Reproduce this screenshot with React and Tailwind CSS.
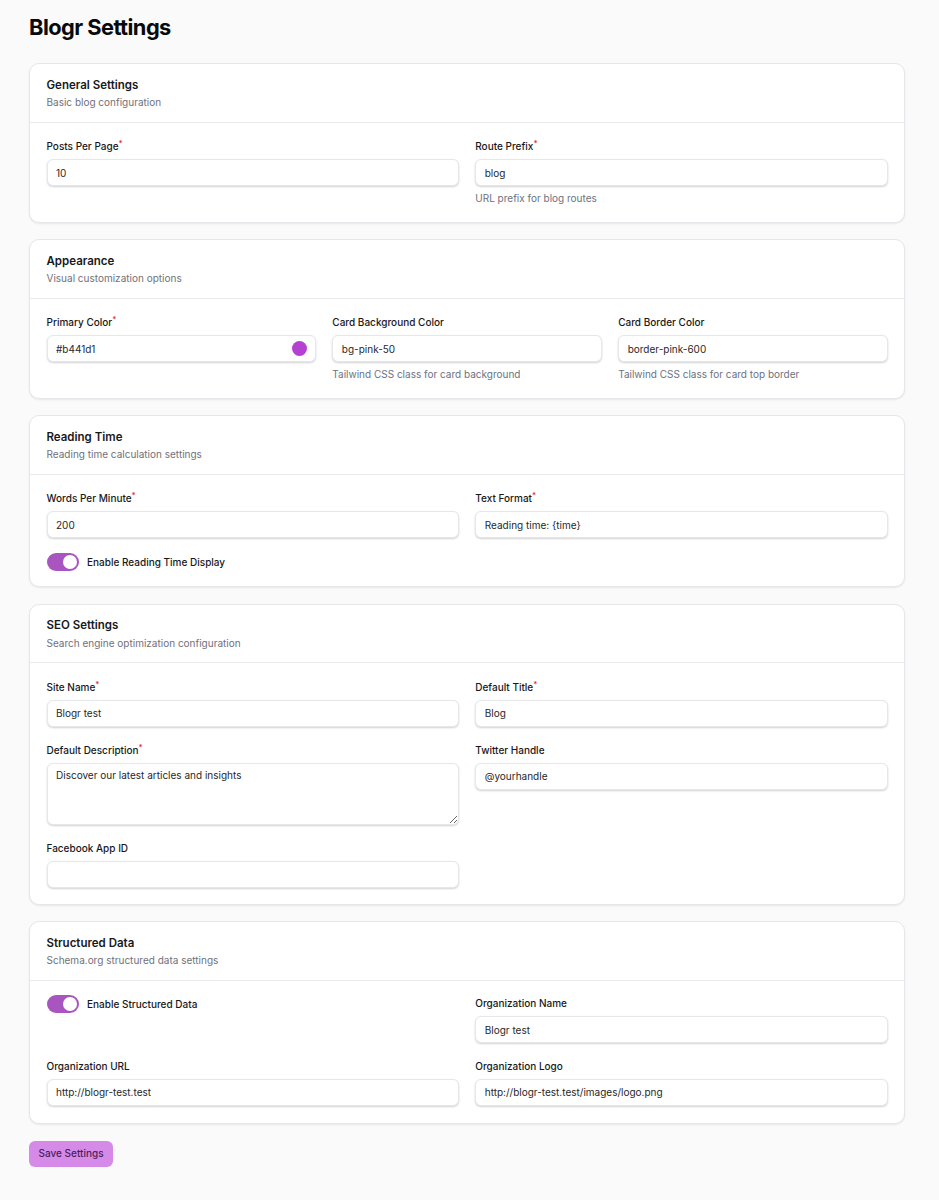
const fontStack = "font-['Inter',sans-serif]";

function Label({ children, required }) {
    return (
        <label className="block h-[13px] text-[10px] leading-[13px] font-medium text-[#18181b]">
            {children}
            {required && <sup className="text-[8px] font-medium text-[#dc2626]">*</sup>}
        </label>
    );
}

function Field({ label, required, value = '', help, swatch }) {
    return (
        <div>
            <Label required={required}>{label}</Label>
            <div className="relative mt-[6px]">
                <input
                    type="text"
                    readOnly
                    value={value}
                    className="block h-[27px] w-full rounded-[6px] border border-[#e5e7eb] bg-white px-[8.5px] text-[10px] text-[#27272a] shadow-[0_1px_2px_rgba(0,0,0,0.18)] outline-none"
                />
                {swatch && (
                    <span className="absolute top-[6px] right-[9px] h-[15px] w-[15px] rounded-full" style={{ backgroundColor: swatch }} />
                )}
            </div>
            {help && <p className="mt-[6px] h-[13.5px] text-[10px] leading-[12px] text-[#6b7280]">{help}</p>}
        </div>
    );
}

function Toggle({ label, className }) {
    return (
        <div className={`flex items-center gap-[8.5px] self-start ${className}`}>
            <span className="flex h-[18px] w-[32px] items-center justify-end rounded-full bg-[#a855c0] pr-[2px]">
                <span className="h-[14px] w-[14px] rounded-full bg-white" />
            </span>
            <span className="text-[10px] font-medium text-[#18181b]">{label}</span>
        </div>
    );
}

function Section({ title, description, children }) {
    return (
        <section className="rounded-[10px] border border-[#e5e7eb] bg-white shadow-[0_1px_2px_rgba(0,0,0,0.08)]">
            <div className="h-[58.5px] border-b border-[#e9eaec] px-[16.5px] pt-[12.5px]">
                <h2 className="text-[11.5px] leading-[16px] font-semibold text-[#18181b]">{title}</h2>
                <p className="mt-[2.5px] text-[10px] leading-[14px] text-[#71717a]">{description}</p>
            </div>
            <div className="px-[16.5px] pt-[17.5px] pb-[16px]">{children}</div>
        </section>
    );
}

export default function App() {
    return (
        <div className={`${fontStack} min-h-[1200px] bg-[#fafafa] pt-[13px] pr-[34px] pl-[29px] antialiased`}>
            <h1 className="h-[50px] text-[21.8px] leading-[28px] font-bold tracking-tight text-[#09090b]">Blogr Settings</h1>

            <div className="flex flex-col gap-[16.5px]">
                <Section title="General Settings" description="Basic blog configuration">
                    <div className="grid grid-cols-2 gap-[16.5px]">
                        <Field label="Posts Per Page" required value="10" />
                        <Field label="Route Prefix" required value="blog" help="URL prefix for blog routes" />
                    </div>
                </Section>

                <Section title="Appearance" description="Visual customization options">
                    <div className="grid grid-cols-3 gap-[16.5px]">
                        <Field label="Primary Color" required value="#b441d1" swatch="#b441d1" />
                        <Field label="Card Background Color" value="bg-pink-50" help="Tailwind CSS class for card background" />
                        <Field label="Card Border Color" value="border-pink-600" help="Tailwind CSS class for card top border" />
                    </div>
                </Section>

                <Section title="Reading Time" description="Reading time calculation settings">
                    <div className="grid grid-cols-2 gap-x-[16.5px] gap-y-[15px]">
                        <Field label="Words Per Minute" required value="200" />
                        <Field label="Text Format" required value="Reading time: {time}" />
                        <Toggle label="Enable Reading Time Display" className="-mb-[1px]" />
                    </div>
                </Section>

                <Section title="SEO Settings" description="Search engine optimization configuration">
                    <div className="grid grid-cols-2 gap-x-[16.5px] gap-y-[17px]">
                        <Field label="Site Name" required value="Blogr test" />
                        <Field label="Default Title" required value="Blog" />
                        <div>
                            <Label required>Default Description</Label>
                            <textarea
                                readOnly
                                value="Discover our latest articles and insights"
                                className="mt-[6px] block h-[62px] w-full rounded-[6px] border border-[#e5e7eb] bg-white px-[8.5px] py-[4px] text-[10px] text-[#27272a] shadow-[0_1px_2px_rgba(0,0,0,0.18)] outline-none"
                            />
                        </div>
                        <Field label="Twitter Handle" value="@yourhandle" />
                        <Field label="Facebook App ID" />
                    </div>
                </Section>

                <Section title="Structured Data" description="Schema.org structured data settings">
                    <div className="-mt-[1px] mb-[1px] grid grid-cols-2 gap-[16.5px]">
                        <Toggle label="Enable Structured Data" className="-mt-[2px]" />
                        <Field label="Organization Name" value="Blogr test" />
                        <Field label="Organization URL" value="http://blogr-test.test" />
                        <Field label="Organization Logo" value="http://blogr-test.test/images/logo.png" />
                    </div>
                </Section>
            </div>

            <button type="button" className="mt-[17px] h-[26px] w-[84px] rounded-[6px] bg-[#d68ae8] text-[10px] font-medium text-[#4a1d5c]">
                Save Settings
            </button>
        </div>
    );
}
